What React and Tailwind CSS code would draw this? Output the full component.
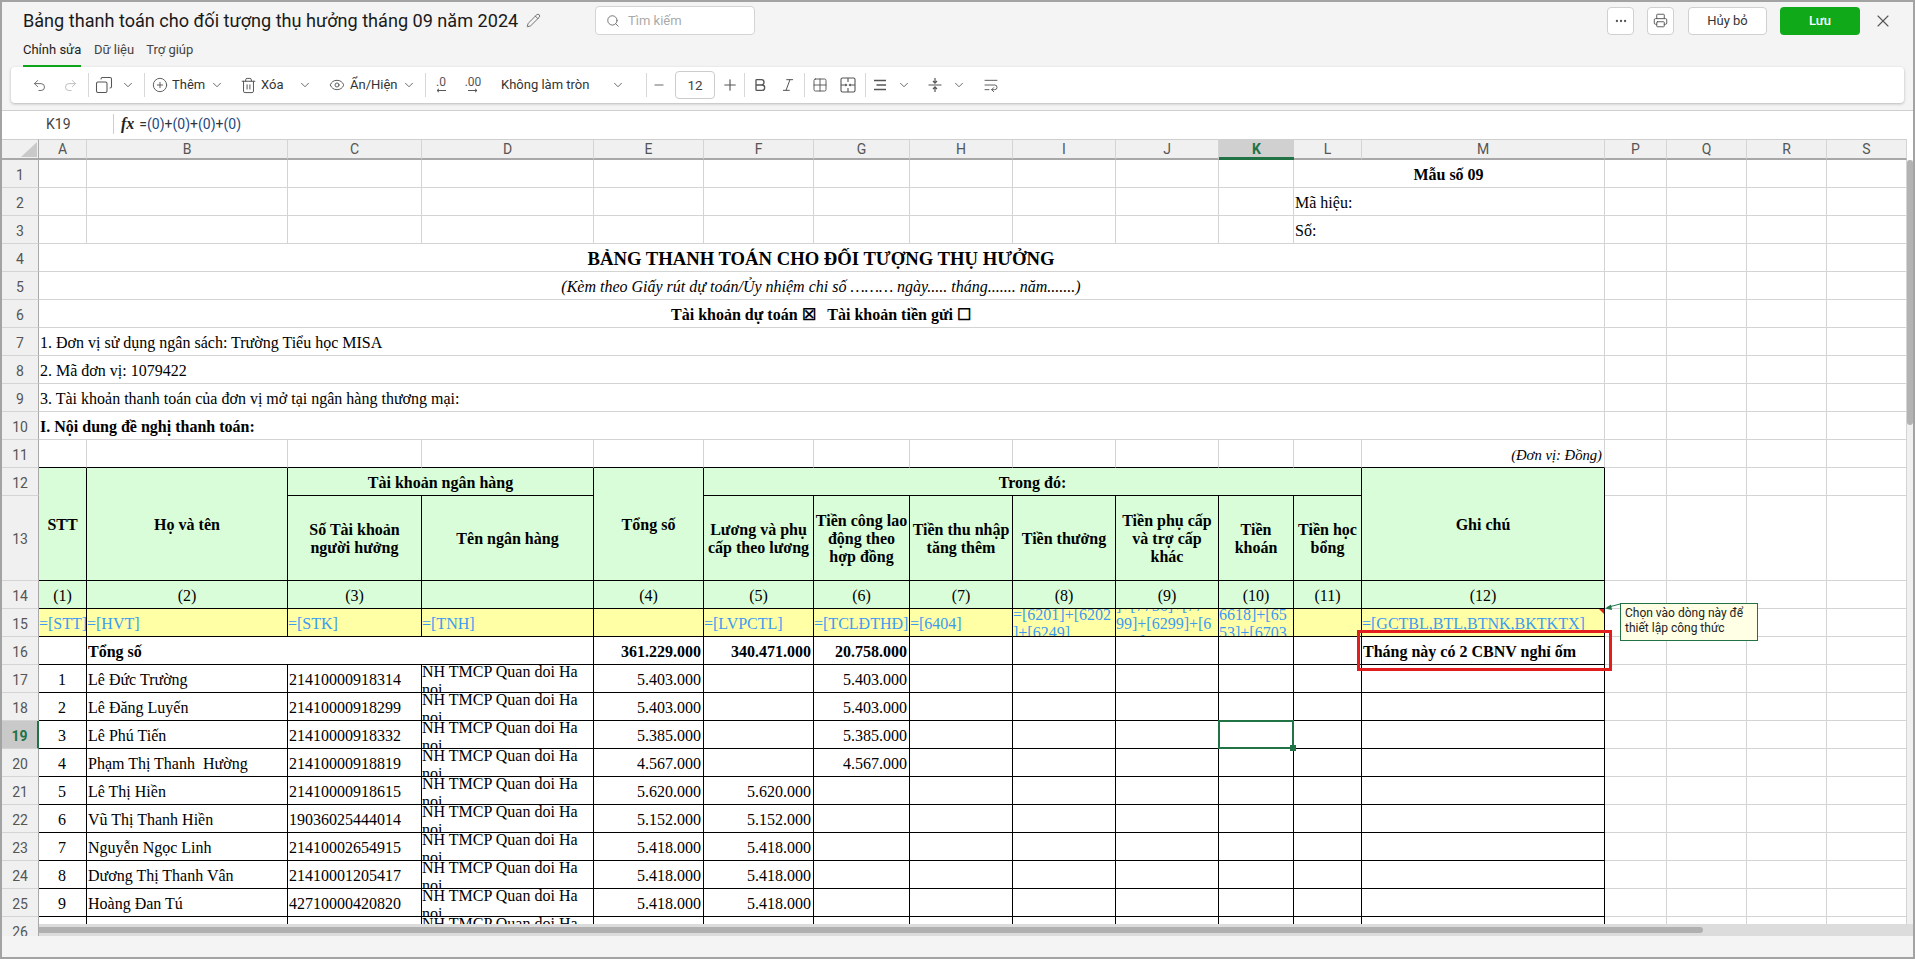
import React from "react";
import { Undo2, Redo2, Copy, ChevronDown, CirclePlus, Trash2, Eye, Minus, Plus, Bold, Italic, Grid2x2, WrapText, Pencil, Search, Ellipsis, Printer, X } from "lucide-react";

const LIGHT = "border-r border-b border-[#d4d4d4]";
const DARK = "border-r border-b border-black";
const BASE = "flex overflow-hidden whitespace-pre";

function C({ cls = "", children, style }) {
  return <div style={style} className={BASE + " " + cls}>{children}</div>;
}
const Blank = () => <div className={LIGHT} />;
const Extra = () => (<><Blank /><Blank /><Blank /><Blank /></>);

function RowHead({ n, active }) {
  return (
    <div className={"flex items-center justify-center pt-[2px] font-['Roboto',sans-serif] text-[14px] border-b " +
      (active ? "bg-[#c9c9c9] text-[#217346] font-bold border-b-[#d4d4d4] border-r-2 border-r-[#217346]" : "bg-[#f0f0f0] text-[#555] border-b-[#d4d4d4] border-r border-r-[#a8a8a8]")}>{n}</div>
  );
}
function ColHead({ n, active }) {
  return (
    <div className={"flex items-center justify-center font-['Roboto',sans-serif] text-[14px] border-t border-t-[#cfcfcf] " +
      (active ? "bg-[#d0d0d0] text-[#217346] font-bold border-b-[3px] border-b-[#217346]" : "bg-[#f0f0f0] text-[#555] border-r border-r-[#d4d4d4] border-b-2 border-b-[#a8a8a8]")}>{n}</div>
  );
}

const cols = ["A","B","C","D","E","F","G","H","I","J","K","L","M","P","Q","R","S"];
const people = [
  ["1","Lê Đức Trường","21410000918314","5.403.000","","5.403.000"],
  ["2","Lê Đăng Luyến","21410000918299","5.403.000","","5.403.000"],
  ["3","Lê Phú Tiến","21410000918332","5.385.000","","5.385.000"],
  ["4","Phạm Thị Thanh  Hường","21410000918819","4.567.000","","4.567.000"],
  ["5","Lê Thị Hiền","21410000918615","5.620.000","5.620.000",""],
  ["6","Vũ Thị Thanh Hiền","19036025444014","5.152.000","5.152.000",""],
  ["7","Nguyễn Ngọc Linh","21410002654915","5.418.000","5.418.000",""],
  ["8","Dương Thị Thanh Vân","21410001205417","5.418.000","5.418.000",""],
  ["9","Hoàng Đan Tú","42710000420820","5.418.000","5.418.000",""],
  ["10","Nguyễn Thị Hằng","","","",""],
];

const TXT = "items-center pt-[3px] pl-[1px] pr-[2px]";
const HEAD = DARK + " bg-[#d9fdd9] items-center justify-center text-center font-bold px-[1px] pt-[2px]";
const IDX = DARK + " bg-[#d9fdd9] items-center justify-center pt-[3px]";
const YEL = DARK + " bg-[#ffffa6] items-center text-[#3b9bf2] pt-[2px]";

function Sheet() {
  const blanks11 = Array.from({ length: 11 }, (_, i) => <Blank key={i} />);
  const full = (n, cls, content) => (
    <React.Fragment key={n}>
      <RowHead n={n} />
      <C cls={"col-span-13 " + LIGHT + " " + TXT + " " + cls}>{content}</C>
      <Extra />
    </React.Fragment>
  );
  return (
    <div className="grid grid-cols-[37px_48px_201px_134px_172px_110px_110px_96px_103px_103px_103px_75px_68px_243px_62px_80px_80px_80px] grid-rows-[21px_repeat(12,28px)_85px_repeat(13,28px)] font-['Liberation_Serif',serif] text-[16px] leading-[18px] text-black bg-white">
      {/* header */}
      <div className="relative bg-[#f0f0f0] border-t border-t-[#cfcfcf] border-r border-r-[#a8a8a8] border-b-2 border-b-[#a8a8a8]">
        <svg className="absolute left-[19px] top-[2px]" width="16" height="15" viewBox="0 0 16 15"><path d="M16 0V15H0Z" fill="#c9c9c9" /></svg>
      </div>
      {cols.map((c) => <ColHead key={c} n={c} active={c === "K"} />)}

      {/* rows 1-3 */}
      <RowHead n={1} />{blanks11}
      <C cls={"col-span-2 justify-center font-bold " + LIGHT + " " + TXT}>Mẫu số 09</C><Extra />
      <RowHead n={2} />{blanks11}
      <C cls={"col-span-2 " + LIGHT + " " + TXT}>Mã hiệu:</C><Extra />
      <RowHead n={3} />{blanks11}
      <C cls={"col-span-2 " + LIGHT + " " + TXT}>Số:</C><Extra />

      {full(4, "justify-center font-bold text-[18.67px]", "BẢNG THANH TOÁN CHO ĐỐI TƯỢNG THỤ HƯỞNG")}
      {full(5, "justify-center italic", "(Kèm theo Giấy rút dự toán/Ủy nhiệm chi số ……… ngày..... tháng....... năm.......)")}
      {full(6, "justify-center font-bold", "Tài khoản dự toán ☒   Tài khoản tiền gửi ☐")}
      {full(7, "", "1. Đơn vị sử dụng ngân sách: Trường Tiểu học MISA")}
      {full(8, "", "2. Mã đơn vị: 1079422")}
      {full(9, "", "3. Tài khoản thanh toán của đơn vị mở tại ngân hàng thương mại:")}
      {full(10, "font-bold", "I. Nội dung đề nghị thanh toán:")}

      {/* row 11 */}
      <RowHead n={11} />
      {Array.from({ length: 12 }, (_, i) => <div key={i} className="border-r border-r-[#d4d4d4] border-b border-b-black" />)}
      <C cls={"border-r border-r-[#d4d4d4] border-b border-b-black justify-end italic text-[14.67px] " + TXT}>(Đơn vị: Đồng)</C>
      <Extra />

      {/* row 12 */}
      <RowHead n={12} />
      <C cls={"row-span-2 " + HEAD}>STT</C>
      <C cls={"row-span-2 " + HEAD}>Họ và tên</C>
      <C cls={"col-span-2 " + HEAD}>Tài khoản ngân hàng</C>
      <C cls={"row-span-2 " + HEAD}>Tổng số</C>
      <C cls={"col-span-7 " + HEAD}>Trong đó:</C>
      <C cls={"row-span-2 " + HEAD}>Ghi chú</C>
      <Extra />

      {/* row 13 */}
      <RowHead n={13} />
      <C cls={HEAD}><span>Số Tài khoản<br />người hưởng</span></C>
      <C cls={HEAD}>Tên ngân hàng</C>
      <C cls={HEAD}><span>Lương và phụ<br />cấp theo lương</span></C>
      <C cls={HEAD}><span>Tiền công lao<br />động theo<br />hợp đồng</span></C>
      <C cls={HEAD}><span>Tiền thu nhập<br />tăng thêm</span></C>
      <C cls={HEAD}>Tiền thưởng</C>
      <C cls={HEAD}><span>Tiền phụ cấp<br />và trợ cấp<br />khác</span></C>
      <C cls={HEAD}><span>Tiền<br />khoán</span></C>
      <C cls={HEAD}><span>Tiền học<br />bổng</span></C>
      <Extra />

      {/* row 14 */}
      <RowHead n={14} />
      {["(1)","(2)","(3)","","(4)","(5)","(6)","(7)","(8)","(9)","(10)","(11)","(12)"].map((t, i) => <C key={i} cls={IDX}>{t}</C>)}
      <Extra />

      {/* row 15 */}
      <RowHead n={15} />
      <C cls={YEL}>=[STT]</C>
      <C cls={YEL}>=[HVT]</C>
      <C cls={YEL}>=[STK]</C>
      <C cls={YEL}>=[TNH]</C>
      <C cls={YEL}></C>
      <C cls={YEL}>=[LVPCTL]</C>
      <C cls={YEL}>=[TCLĐTHĐ]</C>
      <C cls={YEL}>=[6404]</C>
      <C cls={YEL}><span>=[6201]+[6202<br />]+[6249]</span></C>
      <C cls={YEL}><span>]+[7756]+[77<br />99]+[6299]+[6<br />301]</span></C>
      <C cls={YEL}><span>6618]+[65<br />53]+[6703</span></C>
      <C cls={YEL}></C>
      <C cls={"relative " + YEL}>
        <span className="underline">=[GCTBL,BTL,BTNK,BKTKTX]</span>
        <svg className="absolute right-0 top-0" width="5" height="5" viewBox="0 0 5 5"><path d="M0 0H5V5Z" fill="#e0241c" /></svg>
      </C>
      <Extra />

      {/* row 16 */}
      <RowHead n={16} />
      <C cls={DARK} />
      <C cls={"col-span-3 font-bold " + DARK + " " + TXT}>Tổng số</C>
      <C cls={"font-bold justify-end " + DARK + " " + TXT}>361.229.000</C>
      <C cls={"font-bold justify-end " + DARK + " " + TXT}>340.471.000</C>
      <C cls={"font-bold justify-end " + DARK + " " + TXT}>20.758.000</C>
      {Array.from({ length: 5 }, (_, i) => <div key={i} className={DARK} />)}
      <C cls={"font-bold " + DARK + " " + TXT}>Tháng này có 2 CBNV nghỉ ốm</C>
      <Extra />

      {/* data rows 17-26 */}
      {people.map((p, i) => (
        <React.Fragment key={i}>
          <RowHead n={17 + i} active={17 + i === 19} />
          <C cls={"justify-center " + DARK + " " + TXT}>{p[0]}</C>
          <C cls={DARK + " " + TXT}>{p[1]}</C>
          <C cls={DARK + " " + TXT}>{p[2]}</C>
          <div className={DARK + " overflow-hidden whitespace-normal"}><div className="-mt-[2px]">NH TMCP Quan doi Ha noi</div></div>
          <C cls={"justify-end " + DARK + " " + TXT}>{p[3]}</C>
          <C cls={"justify-end " + DARK + " " + TXT}>{p[4]}</C>
          <C cls={"justify-end " + DARK + " " + TXT}>{p[5]}</C>
          <div className={DARK} />
          <div className={DARK} />
          <div className={DARK} />
          {17 + i === 19 ? (
            <div className={"relative " + DARK}>
              <div className="absolute -left-[1px] -top-[1px] -right-[1px] -bottom-[1px] border-2 border-[#217346]" />
              <div className="absolute -right-[3px] -bottom-[3px] size-[6px] bg-[#217346]" />
            </div>
          ) : <div className={DARK} />}
          <div className={DARK} />
          <div className={DARK} />
          <Extra />
        </React.Fragment>
      ))}
    </div>
  );
}

function Sep({ cls }) { return <div className={"w-px h-[24px] bg-[#d8d8d8] shrink-0 " + cls} />; }
const ICON = "size-[16px] shrink-0 text-[#555]";
const CHEV = "size-[14px] shrink-0 text-[#555]";

function Toolbar() {
  return (
    <div className="mx-[9px] mt-0 h-[36px] rounded-[4px] bg-white shadow-[0_1px_3px_rgba(0,0,0,0.25)] flex items-center font-['Roboto',sans-serif] text-[13px] text-[#333] whitespace-nowrap">
      <Undo2 strokeWidth={1.5} className="size-[15px] shrink-0 text-[#666] ml-[21px]" />
      <Redo2 strokeWidth={1.5} className="size-[15px] shrink-0 text-[#bbb] ml-[16px]" />
      <Sep cls="ml-[10px]" />
      <Copy strokeWidth={1.4} className="size-[18px] shrink-0 text-[#555] ml-[6px] -scale-x-100" />
      <ChevronDown strokeWidth={1.5} className={CHEV + " ml-[8px]"} />
      <Sep cls="ml-[9px]" />
      <CirclePlus strokeWidth={1.4} className={ICON + " ml-[7px]"} />
      <span className="ml-[4px] w-[33px] shrink-0">Thêm</span>
      <ChevronDown strokeWidth={1.5} className={CHEV + " ml-[5px]"} />
      <Trash2 strokeWidth={1.4} className="size-[17px] shrink-0 text-[#555] ml-[16px]" />
      <span className="ml-[4px] w-[23px] shrink-0">Xóa</span>
      <ChevronDown strokeWidth={1.5} className={CHEV + " ml-[14px]"} />
      <Eye strokeWidth={1.4} className={ICON + " ml-[17px]"} />
      <span className="ml-[5px] w-[47px] shrink-0">Ẩn/Hiện</span>
      <ChevronDown strokeWidth={1.5} className={CHEV + " ml-[5px]"} />
      <Sep cls="ml-[9px]" />
      <div className="ml-[5px] w-[20px] shrink-0 flex flex-col items-center text-[#555] text-[12px] leading-[11px]">
        <span>.0</span>
        <svg width="12" height="5" viewBox="0 0 12 5" fill="none" stroke="#555"><path d="M11 2.5H2M4 .8 2 2.5 4 4.2" /></svg>
      </div>
      <div className="ml-[10px] w-[24px] shrink-0 flex flex-col items-center text-[#555] text-[12px] leading-[11px]">
        <span>.00</span>
        <svg width="12" height="5" viewBox="0 0 12 5" fill="none" stroke="#555"><path d="M1 2.5H10M8 .8 10 2.5 8 4.2" /></svg>
      </div>
      <span className="ml-[16px] w-[88px] shrink-0">Không làm tròn</span>
      <ChevronDown strokeWidth={1.5} className={CHEV + " ml-[22px]"} />
      <Sep cls="ml-[21px]" />
      <Minus strokeWidth={1.5} className={CHEV + " ml-[5px]"} />
      <div className="ml-[9px] w-[40px] h-[28px] shrink-0 flex items-center justify-center rounded-[4px] border border-[#ccc] text-[#444] text-[13.5px]">12</div>
      <Plus strokeWidth={1.5} className="size-[18px] shrink-0 text-[#555] ml-[6px]" />
      <Sep cls="ml-[5px]" />
      <Bold strokeWidth={2} className={ICON + " ml-[7px]"} />
      <Italic strokeWidth={1.5} className={ICON + " ml-[12px]"} />
      <Sep cls="ml-[8px]" />
      <Grid2x2 strokeWidth={1.4} className={ICON + " ml-[7px]"} />
      <svg className={ICON + " ml-[12px]"} viewBox="0 0 16 16" fill="none" stroke="currentColor" strokeWidth="1.1">
        <rect x="1" y="1" width="14" height="14" rx="1.5" />
        <path d="M8 1V5M8 11V15M1 8H5M11 8H15M3.5 8H6.5M5.5 6.8 6.7 8 5.5 9.2M12.5 8H9.5M10.5 6.8 9.3 8 10.5 9.2" />
      </svg>
      <Sep cls="ml-[9px]" />
      <svg className={ICON + " ml-[6px]"} viewBox="0 0 16 16" fill="none" stroke="currentColor" strokeWidth="1.3">
        <path d="M2 3.5H14M4.5 8H14M2 12.5H14" />
      </svg>
      <ChevronDown strokeWidth={1.5} className={CHEV + " ml-[9px]"} />
      <svg className={ICON + " ml-[16px]"} viewBox="0 0 16 16" fill="none" stroke="currentColor" strokeWidth="1.2">
        <path d="M1.5 8H14.5M8 1V6M6 4 8 6.2 10 4M8 15V10M6 12 8 9.8 10 12" />
      </svg>
      <ChevronDown strokeWidth={1.5} className={CHEV + " ml-[9px]"} />
      <WrapText strokeWidth={1.4} className={ICON + " ml-[17px]"} />
    </div>
  );
}

export default function App() {
  return (
    <div className="h-screen w-screen overflow-hidden flex flex-col border-2 border-[#a3a3a3] bg-[#f4f4f4] font-['Roboto',sans-serif]">
      {/* top bar */}
      <div className="h-[39px] shrink-0 flex items-center pl-[21px] pb-[2px]">
        <span className="w-[495px] shrink-0 text-[18.1px] text-[#1a1a1a] whitespace-nowrap">Bảng thanh toán cho đối tượng thụ hưởng tháng 09 năm 2024</span>
        <Pencil strokeWidth={1.3} className="size-[15px] ml-[8px] shrink-0 text-[#555]" />
        <div className="ml-[54px] w-[160px] h-[29px] shrink-0 flex items-center rounded-[4px] border border-[#d4d4d4] bg-white pl-[10px]">
          <Search strokeWidth={1.5} className="size-[14px] text-[#666]" />
          <span className="ml-[8px] text-[13px] text-[#aaa]">Tìm kiếm</span>
        </div>
        <div className="ml-auto flex items-center pr-[20px]">
          <div className="w-[27px] h-[28px] flex items-center justify-center rounded-[4px] border border-[#d0d0d0] bg-white"><Ellipsis className="size-[14px] text-[#555]" /></div>
          <div className="ml-[13px] w-[27px] h-[28px] flex items-center justify-center rounded-[4px] border border-[#d0d0d0] bg-white"><Printer strokeWidth={1.5} className="size-[15px] text-[#555]" /></div>
          <div className="ml-[14px] w-[79px] h-[28px] flex items-center justify-center rounded-[4px] border border-[#d0d0d0] bg-white text-[13px] text-[#333]">Hủy bỏ</div>
          <div className="ml-[13px] w-[80px] h-[28px] flex items-center justify-center rounded-[4px] bg-[#0fa91a] text-[13px] font-medium text-white">Lưu</div>
          <X strokeWidth={1.3} className="size-[20px] ml-[13px] text-[#555]" />
        </div>
      </div>
      {/* tabs */}
      <div className="h-[26px] shrink-0 flex pl-[21px] text-[13px] text-[#444]">
        <div className="w-[58px] h-full flex items-center pb-[6px] border-b-2 border-[#0fa91a] text-[#222] whitespace-nowrap">Chỉnh sửa</div>
        <div className="ml-[13px] h-full flex items-center pb-[8px] whitespace-nowrap">Dữ liệu</div>
        <div className="ml-[12px] h-full flex items-center pb-[8px] whitespace-nowrap">Trợ giúp</div>
      </div>
      <Toolbar />
      {/* formula bar */}
      <div className="mt-[7px] h-[29px] shrink-0 bg-white border-t border-[#cfcfcf] flex items-center pb-[2px]">
        <span className="ml-[44px] w-[67px] shrink-0 text-[14px] text-[#444]">K19</span>
        <div className="w-px h-[20px] bg-[#cfcfcf]" />
        <span className="ml-[7px] font-['Liberation_Serif',serif] italic font-bold text-[16px] text-[#222]">fx</span>
        <span className="ml-[5px] text-[14px] text-[#333]">=<span className="text-[#24487f]">(0)</span>+<span className="text-[#24487f]">(0)</span>+<span className="text-[#24487f]">(0)</span>+<span className="text-[#24487f]">(0)</span></span>
      </div>
      {/* sheet */}
      <div className="relative h-[797px] shrink-0 overflow-hidden bg-white">
        <Sheet />
        {/* red highlight */}
        <div className="absolute left-[1355px] top-[491px] w-[255px] h-[41px] border-[3px] border-[#e11d1d]" />
        {/* comment */}
        <svg className="absolute left-[1602px] top-[464px]" width="20" height="10" viewBox="0 0 20 10" fill="none"><path d="M16 1 3 4.5" stroke="#217346" /><path d="M1 5.5 7 1.5 8 7Z" fill="#217346" /></svg>
        <div className="absolute left-[1618px] top-[464px] w-[138px] h-[38px] bg-[#ffffe6] border border-[#217346] px-[4px] py-[2px] text-[12px] leading-[15px] text-[#222] font-['Roboto',sans-serif]">Chọn vào dòng này để<br />thiết lập công thức</div>
        {/* vertical scrollbar */}
        <div className="absolute right-0 top-[21px] bottom-[12px] w-[6px] bg-[#f0f0f0]">
          <div className="h-[265px] w-full rounded-full bg-[#b3b3b3]" />
        </div>
        {/* horizontal scrollbar */}
        <div className="absolute left-[37px] right-0 bottom-0 h-[12px] bg-[#dcdcdc] pt-[3px]">
          <div className="h-[6px] w-[1664px] rounded-r-[3px] bg-[#b0b0b0]" />
        </div>
      </div>
    </div>
  );
}
